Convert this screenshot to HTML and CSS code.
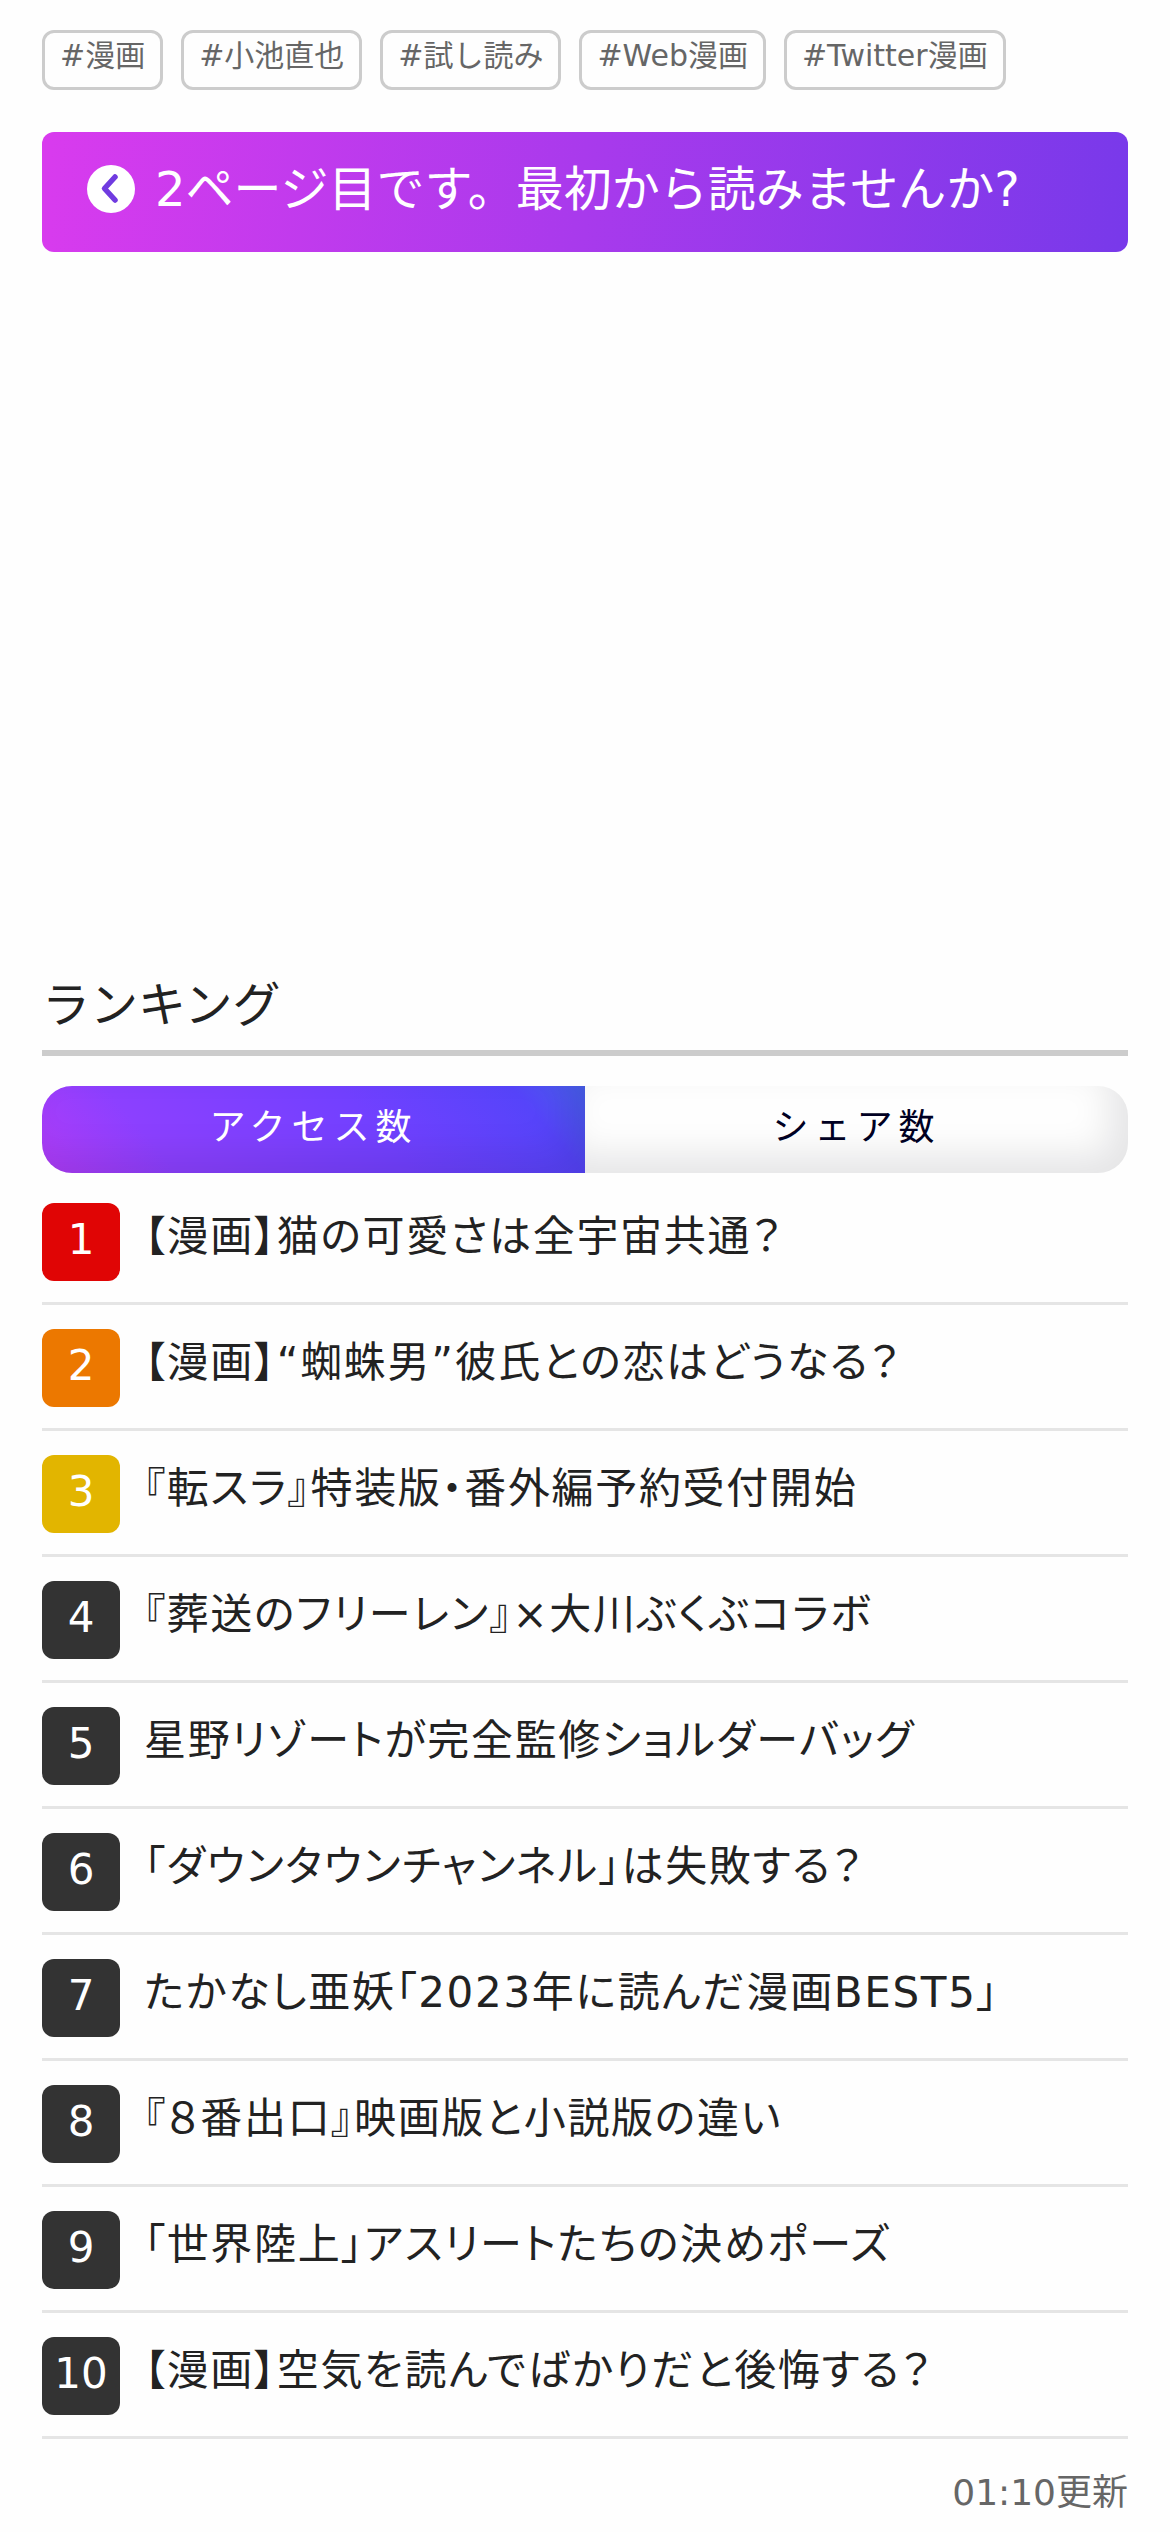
FILE: index.html
```html
<!DOCTYPE html>
<html lang="ja">
<head>
<meta charset="utf-8">
<meta name="viewport" content="width=device-width, initial-scale=1">
<title>ランキング</title>
<link rel="stylesheet" href="styles.css">
</head>
<body>
<main class="page">
  <ul class="tags">
    <li><a class="tag" href="#">#漫画</a></li>
    <li><a class="tag" href="#">#小池直也</a></li>
    <li><a class="tag" href="#">#試し読み</a></li>
    <li><a class="tag" href="#">#Web漫画</a></li>
    <li><a class="tag" href="#">#Twitter漫画</a></li>
  </ul>

  <a class="first-page" href="#">
    <svg class="first-page-icon" viewBox="0 0 48 48" aria-hidden="true">
      <circle cx="24" cy="24" r="24" fill="#fff"/>
      <path d="M28 12 L17.500 23.500 L28 35" fill="none" stroke="#703be0" stroke-width="5.500" stroke-linecap="round" stroke-linejoin="round"/>
    </svg>
    <span>2ページ目です。最初から読みませんか?</span>
  </a>

  <section class="ranking">
    <h2 class="ranking-title">ランキング</h2>
    <div class="tabs">
      <button class="tab tab-active" type="button">アクセス数</button>
      <button class="tab" type="button">シェア数</button>
    </div>
    <ol class="list">
      <li class="item"><span class="rank rank-first">1</span><a class="title" href="#">【漫画】猫の可愛さは全宇宙共通？</a></li>
      <li class="item"><span class="rank rank-second">2</span><a class="title" href="#">【漫画】“蜘蛛男”彼氏との恋はどうなる？</a></li>
      <li class="item"><span class="rank rank-third">3</span><a class="title" href="#">『転スラ』特装版・番外編予約受付開始</a></li>
      <li class="item"><span class="rank">4</span><a class="title" href="#">『葬送のフリーレン』×大川ぶくぶコラボ</a></li>
      <li class="item"><span class="rank">5</span><a class="title" href="#">星野リゾートが完全監修ショルダーバッグ</a></li>
      <li class="item"><span class="rank">6</span><a class="title" href="#">「ダウンタウンチャンネル」は失敗する？</a></li>
      <li class="item"><span class="rank">7</span><a class="title" href="#">たかなし亜妖「2023年に読んだ漫画BEST5」</a></li>
      <li class="item"><span class="rank">8</span><a class="title" href="#">『８番出口』映画版と小説版の違い</a></li>
      <li class="item"><span class="rank">9</span><a class="title" href="#">「世界陸上」アスリートたちの決めポーズ</a></li>
      <li class="item"><span class="rank">10</span><a class="title" href="#">【漫画】空気を読んでばかりだと後悔する？</a></li>
    </ol>
    <p class="updated">01:10更新</p>
  </section>
</main>
</body>
</html>
```
FILE: styles.css
```css
* {
  box-sizing: border-box;
}

body {
  margin: 0;
  background: #fefefe;
  color: #222;
  font-family: "DejaVu Sans", "Noto Sans CJK JP", sans-serif;
}

a {
  color: inherit;
  text-decoration: none;
}

.page {
  padding: 30px 42px 0;
}

.tags {
  display: flex;
  flex-wrap: wrap;
  gap: 18px;
  margin: 0 0 42px;
  padding: 0;
  list-style: none;
}

.tag {
  display: block;
  height: 60px;
  padding: 0 15px;
  border: 3px solid #ccc;
  border-radius: 12px;
  color: #666;
  font-size: 30px;
  line-height: 45px;
}

.first-page {
  display: flex;
  align-items: center;
  gap: 20px;
  min-height: 120px;
  padding: 0 45px 6px;
  border-radius: 12px;
  background: linear-gradient(98deg, #d93bee, #7839ea);
  color: #fff;
  font-size: 48px;
  line-height: 72px;
}

.first-page-icon {
  flex: none;
  width: 48px;
  height: 48px;
}

.ranking {
  margin-top: 714px;
}

.ranking-title {
  margin: 0 0 30px;
  padding-bottom: 6px;
  border-bottom: 6px solid #ccc;
  font-size: 48px;
  font-weight: 400;
  line-height: 78px;
}

.tabs {
  display: grid;
  grid-template-columns: 1fr 1fr;
  margin-bottom: 30px;
  border-radius: 30px;
  overflow: hidden;
}

.tab {
  height: 87px;
  padding: 0 0 12px;
  border: 0;
  background: #fefefe;
  box-shadow: inset -18px -18px 36px rgba(0, 0, 20, .1);
  color: #002;
  font: inherit;
  font-size: 36px;
  letter-spacing: 6px;
}

.tab-active {
  background: linear-gradient(50deg, #b03cf8, #8c40ff 22%, #7240ff 60%, #5644fa 88%, #4860ee);
  color: #fff;
}

.list {
  margin: 0;
  padding: 0;
  list-style: none;
}

.item {
  display: flex;
  gap: 24px;
  height: 102px;
  margin-bottom: 24px;
  border-bottom: 3px solid #e5e5e5;
}

.rank {
  flex: none;
  width: 78px;
  height: 78px;
  border-radius: 12px;
  background: #333;
  color: #fff;
  font-size: 42px;
  line-height: 74px;
  text-align: center;
}

.rank-first {
  background: #e00505;
}

.rank-second {
  background: #ec7800;
}

.rank-third {
  background: #e2b500;
}

.title {
  font-size: 42px;
  line-height: 68px;
  letter-spacing: .04em;
  font-feature-settings: "palt";
}

.updated {
  margin: 0;
  color: #666;
  font-size: 36px;
  line-height: 60px;
  text-align: right;
}
```
